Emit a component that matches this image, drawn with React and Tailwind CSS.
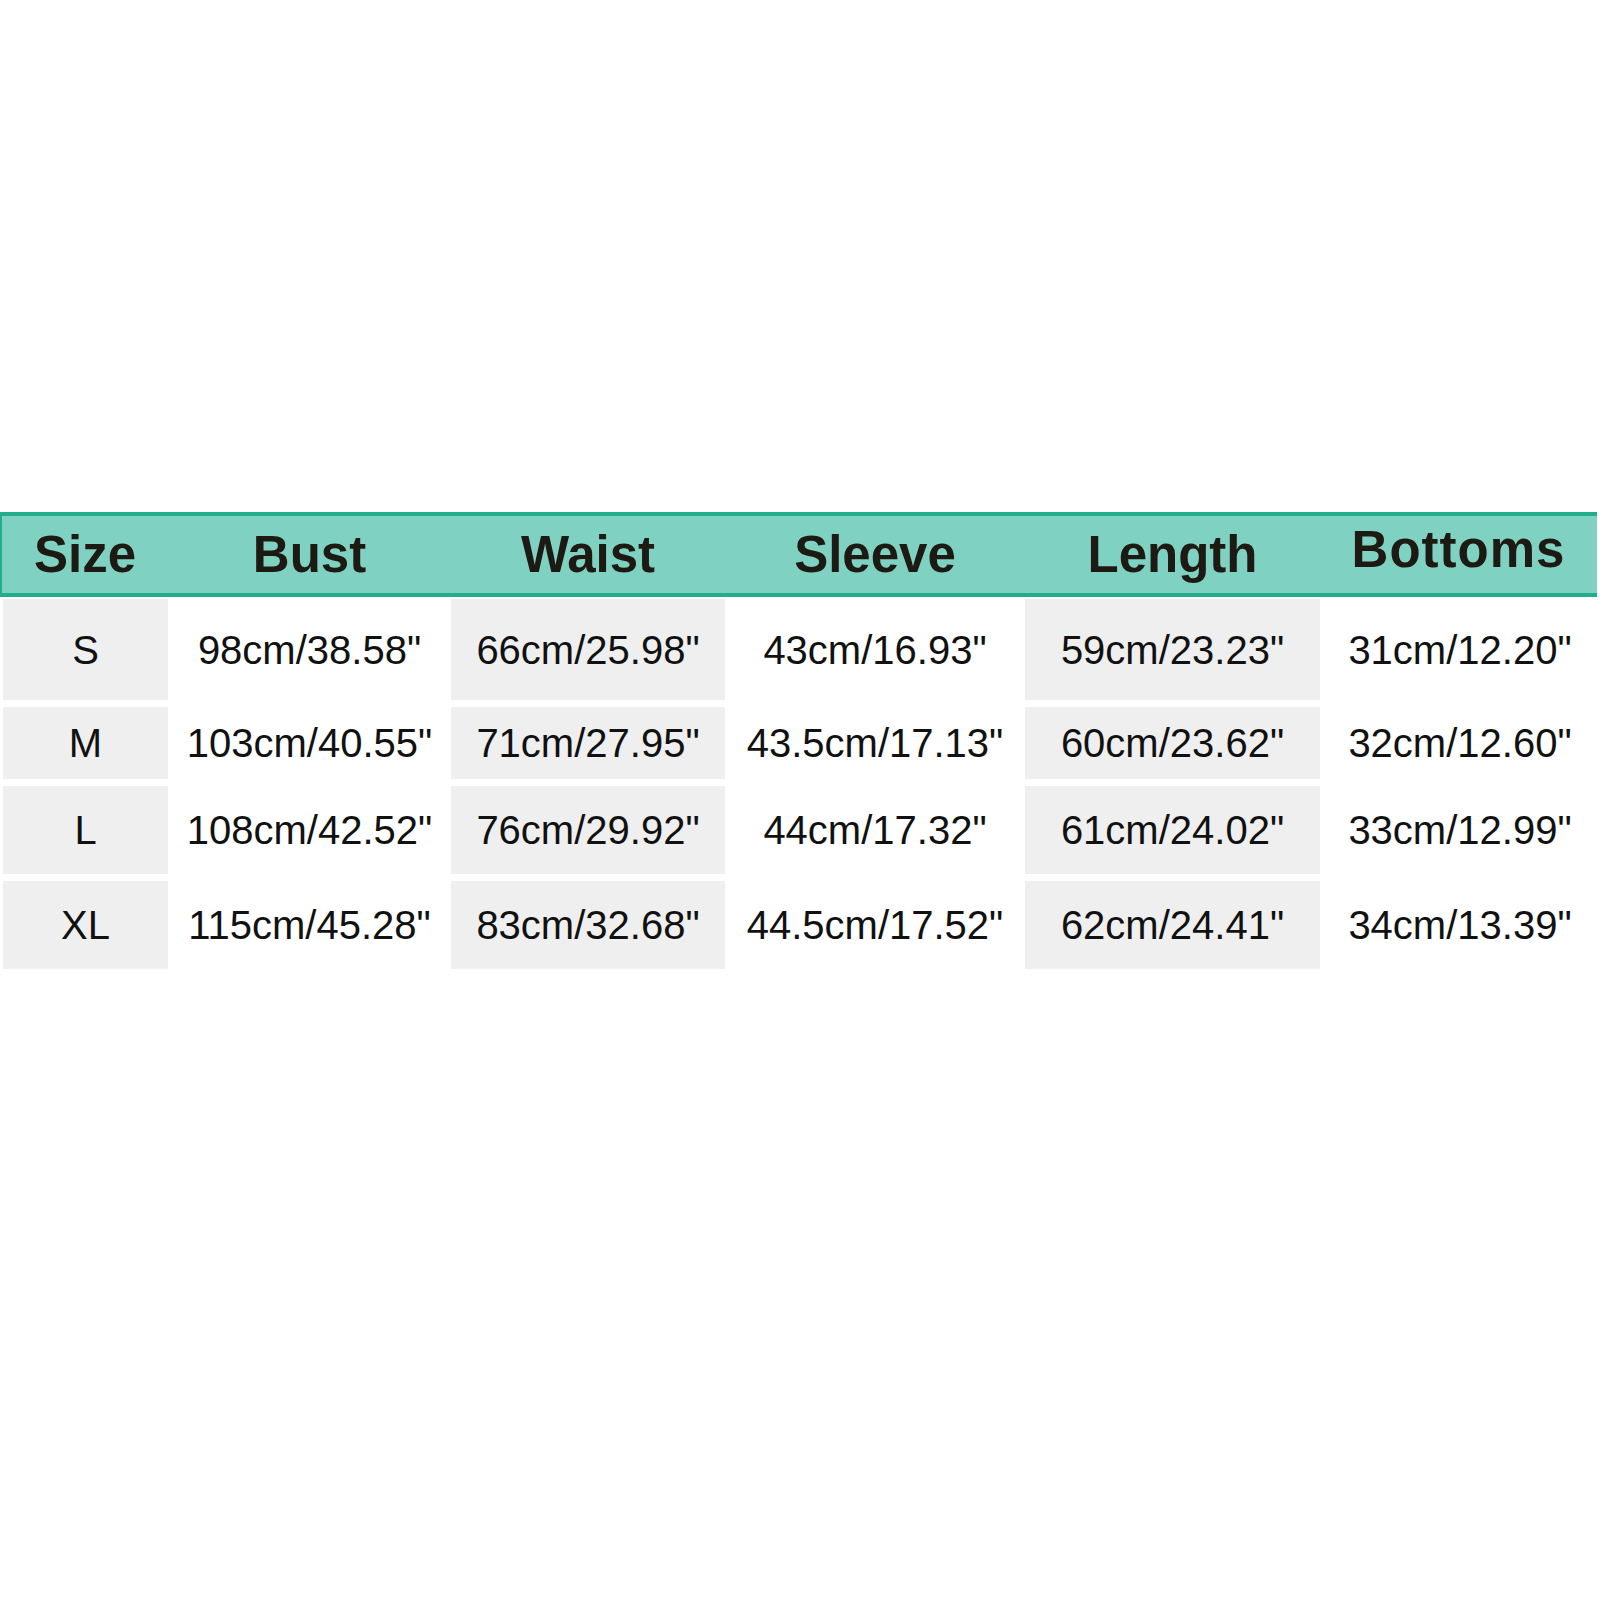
import React from 'react'

const headers = ['Size', 'Bust', 'Waist', 'Sleeve', 'Length', 'Bottoms']

const rows = [
  { h: 'h-[101px]', cells: ['S', '98cm/38.58"', '66cm/25.98"', '43cm/16.93"', '59cm/23.23"', '31cm/12.20"'] },
  { h: 'h-[72px]', cells: ['M', '103cm/40.55"', '71cm/27.95"', '43.5cm/17.13"', '60cm/23.62"', '32cm/12.60"'] },
  { h: 'h-[88px]', cells: ['L', '108cm/42.52"', '76cm/29.92"', '44cm/17.32"', '61cm/24.02"', '33cm/12.99"'] },
  { h: 'h-[88px]', cells: ['XL', '115cm/45.28"', '83cm/32.68"', '44.5cm/17.52"', '62cm/24.41"', '34cm/13.39"'] },
]

// gray columns alternate with white ones
const shade = ['bg-[#efefef]', 'bg-white', 'bg-[#efefef]', 'bg-white', 'bg-[#efefef]', 'bg-white']

export default function App() {
  return (
    <div className="w-[1600px] h-[1600px] bg-white pt-[512px]" style={{ fontFamily: '"Liberation Sans", Arial, sans-serif' }}>
      <div className="h-[85px] mr-[3px] border-t-4 border-b-4 border-l-2 border-[#22ae8c] bg-[#7fd2c1] grid grid-cols-[166px_283px_274px_300px_295px_1fr] items-center text-[#1c1a12] font-bold text-[51px] leading-none">
        {headers.map((t, i) => (
          <div key={t} className={i === 5 ? 'text-center -translate-y-[5px] tracking-[1px]' : 'text-center'}>{t}</div>
        ))}
      </div>
      <div className="mt-[2px] flex flex-col gap-[7px] pl-[3px]">
        {rows.map((r) => (
          <div key={r.cells[0]} className={`${r.h} grid grid-cols-[165px_283px_274px_300px_295px_280px] text-[40px] text-[#111] leading-none`}>
            {r.cells.map((c, i) => (
              <div key={i} className={`${shade[i]} flex items-center justify-center`}>{c}</div>
            ))}
          </div>
        ))}
      </div>
    </div>
  )
}
